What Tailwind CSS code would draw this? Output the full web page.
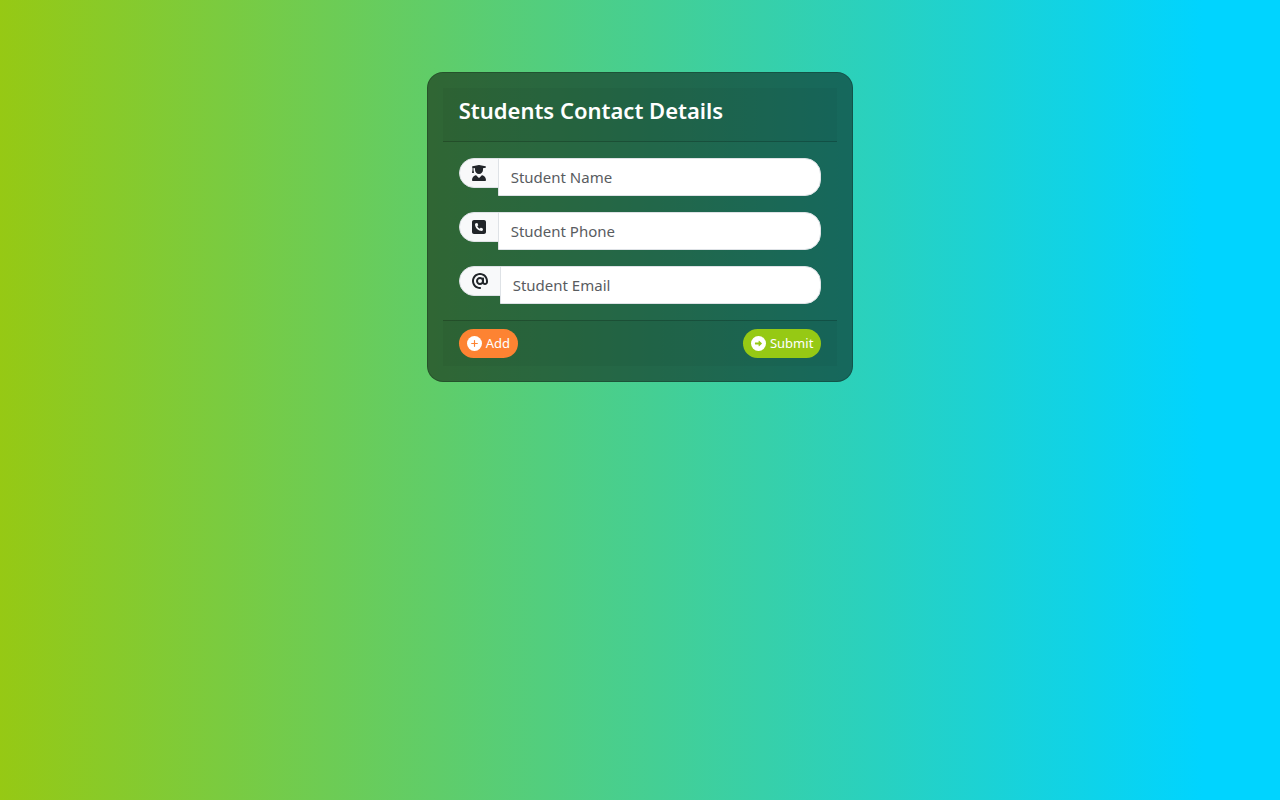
<!DOCTYPE html>
<html lang="en">
<head>
  <meta charset="UTF-8">
  <meta name="viewport" content="width=device-width, initial-scale=1.0">
  <title>Students Contact Details</title>
  <script src="https://cdn.jsdelivr.net/npm/@tailwindcss/browser@4"></script>
</head>
<body class="min-h-screen bg-linear-[90deg,#96c914_0%,#00d4ff_94%] font-['Noto_Sans',sans-serif] text-[15px] text-[#212529]">
  <main class="flex justify-center pt-18">
    <form class="w-1/3 min-w-80 rounded-2xl border border-black/20 bg-black/50 p-[15px]" onsubmit="return false">

      <!-- header -->
      <header class="border-b border-black/20 bg-black/3 px-4 pt-2 pb-4">
        <h1 class="text-[22px] leading-[29px] font-semibold text-white">Students Contact Details</h1>
      </header>

      <!-- fields -->
      <div id="fields" class="space-y-4 p-4">
        <div class="flex items-start">
          <label for="studentName" class="-mr-px flex h-[30px] items-center rounded-l-full border border-[#dee2e6] bg-[#f8f9fa] px-3">
            <svg class="h-4 w-[14px]" viewBox="0 0 448 512" fill="currentColor" role="img" aria-label="Student Name"><path d="M219.3 .5c3.1-.6 6.3-.6 9.4 0l200 40C439.9 42.7 448 52.6 448 64s-8.1 21.3-19.3 23.5L352 102.9V160c0 70.7-57.3 128-128 128s-128-57.3-128-128V102.9L48 93.3v65.1l15.7 78.4c.9 4.7-.3 9.6-3.3 13.3s-7.6 5.9-12.4 5.9H16c-4.8 0-9.3-2.1-12.4-5.9s-4.3-8.6-3.3-13.3L16 158.4V86.6C6.5 83.3 0 74.3 0 64C0 52.6 8.1 42.7 19.3 40.5l200-40zM111.9 327.7c10.5-3.4 21.8 .4 29.4 8.5l71 75.5c6.3 6.7 17 6.7 23.3 0l71-75.5c7.6-8.1 18.9-11.9 29.4-8.5C401 348.6 448 409.4 448 481.3c0 17-13.8 30.7-30.7 30.7H30.7C13.8 512 0 498.2 0 481.3c0-71.9 47-132.7 111.9-153.6z"/></svg>
          </label>
          <input id="studentName" type="text" placeholder="Student Name" class="h-[38px] min-w-0 flex-1 rounded-r-2xl border border-[#dee2e6] bg-white px-3 placeholder:text-[#595c5f]">
        </div>
        <div class="flex items-start">
          <label for="studentPhone" class="-mr-px flex h-[30px] items-center rounded-l-full border border-[#dee2e6] bg-[#f8f9fa] px-3">
            <svg class="h-4 w-[14px]" viewBox="0 0 448 512" fill="currentColor" role="img" aria-label="Student Phone"><path d="M64 32C28.7 32 0 60.7 0 96V416c0 35.3 28.7 64 64 64H384c35.3 0 64-28.7 64-64V96c0-35.3-28.7-64-64-64H64zm90.7 96.7c9.7-2.6 19.9 2.3 23.7 11.6l20 48c3.4 8.2 1 17.6-5.8 23.2L168 231.7c16.6 35.2 45.1 63.7 80.3 80.3l20.2-24.7c5.6-6.8 15-9.2 23.2-5.8l48 20c9.3 3.9 14.2 14 11.6 23.7l-12 44C336.9 378 329 384 320 384C196.3 384 96 283.7 96 160c0-9 6-16.9 14.7-19.3l44-12z"/></svg>
          </label>
          <input id="studentPhone" type="tel" placeholder="Student Phone" class="h-[38px] min-w-0 flex-1 rounded-r-2xl border border-[#dee2e6] bg-white px-3 placeholder:text-[#595c5f]">
        </div>
        <div class="flex items-start">
          <label for="studentEmail" class="-mr-px flex h-[30px] items-center rounded-l-full border border-[#dee2e6] bg-[#f8f9fa] px-3">
            <svg class="size-4" viewBox="0 0 512 512" fill="currentColor" role="img" aria-label="Student Email"><path d="M256 64C150 64 64 150 64 256s86 192 192 192c17.7 0 32 14.3 32 32s-14.3 32-32 32C114.6 512 0 397.4 0 256S114.6 0 256 0S512 114.6 512 256v32c0 53-43 96-96 96c-29.3 0-55.6-13.2-73.2-33.9C320 371.1 289.5 384 256 384c-70.7 0-128-57.3-128-128s57.3-128 128-128c27.9 0 53.7 8.9 74.7 24.1c5.7-5 13.1-8.1 21.3-8.1c17.7 0 32 14.3 32 32v80 32c0 17.7 14.3 32 32 32s32-14.3 32-32V256c0-106-86-192-192-192zm64 192a64 64 0 1 0 -128 0 64 64 0 1 0 128 0z"/></svg>
          </label>
          <input id="studentEmail" type="email" placeholder="Student Email" class="h-[38px] min-w-0 flex-1 rounded-r-2xl border border-[#dee2e6] bg-white px-3 placeholder:text-[#595c5f]">
        </div>
      </div>

      <!-- actions -->
      <footer class="flex justify-between border-t border-black/20 bg-black/3 px-4 py-2 text-[13px] text-white">
        <button type="button" class="flex h-[29px] items-center gap-1 rounded-full bg-[#fd8332] px-2">
          <svg class="size-[15px]" viewBox="0 0 512 512" aria-hidden="true"><circle cx="256" cy="256" r="256" fill="#fff"/><path d="M256 160v192M160 256h192" fill="none" stroke="#fd8332" stroke-width="40" stroke-linecap="round"/></svg>
          Add
        </button>
        <button type="submit" class="flex h-[29px] items-center gap-1 rounded-full bg-[#96c914] px-2">
          <svg class="size-[15px]" viewBox="0 0 512 512" aria-hidden="true"><circle cx="256" cy="256" r="256" fill="#fff"/><path d="M148 224h112v-52c0-10 10-15 18-8l92 84c5 5 5 11 0 16l-92 84c-8 7-18 2-18-8v-52H148c-8 0-14-6-14-14v-36c0-8 6-14 14-14z" fill="#96c914"/></svg>
          Submit
        </button>
      </footer>
    </form>
  </main>
</body>
</html>
